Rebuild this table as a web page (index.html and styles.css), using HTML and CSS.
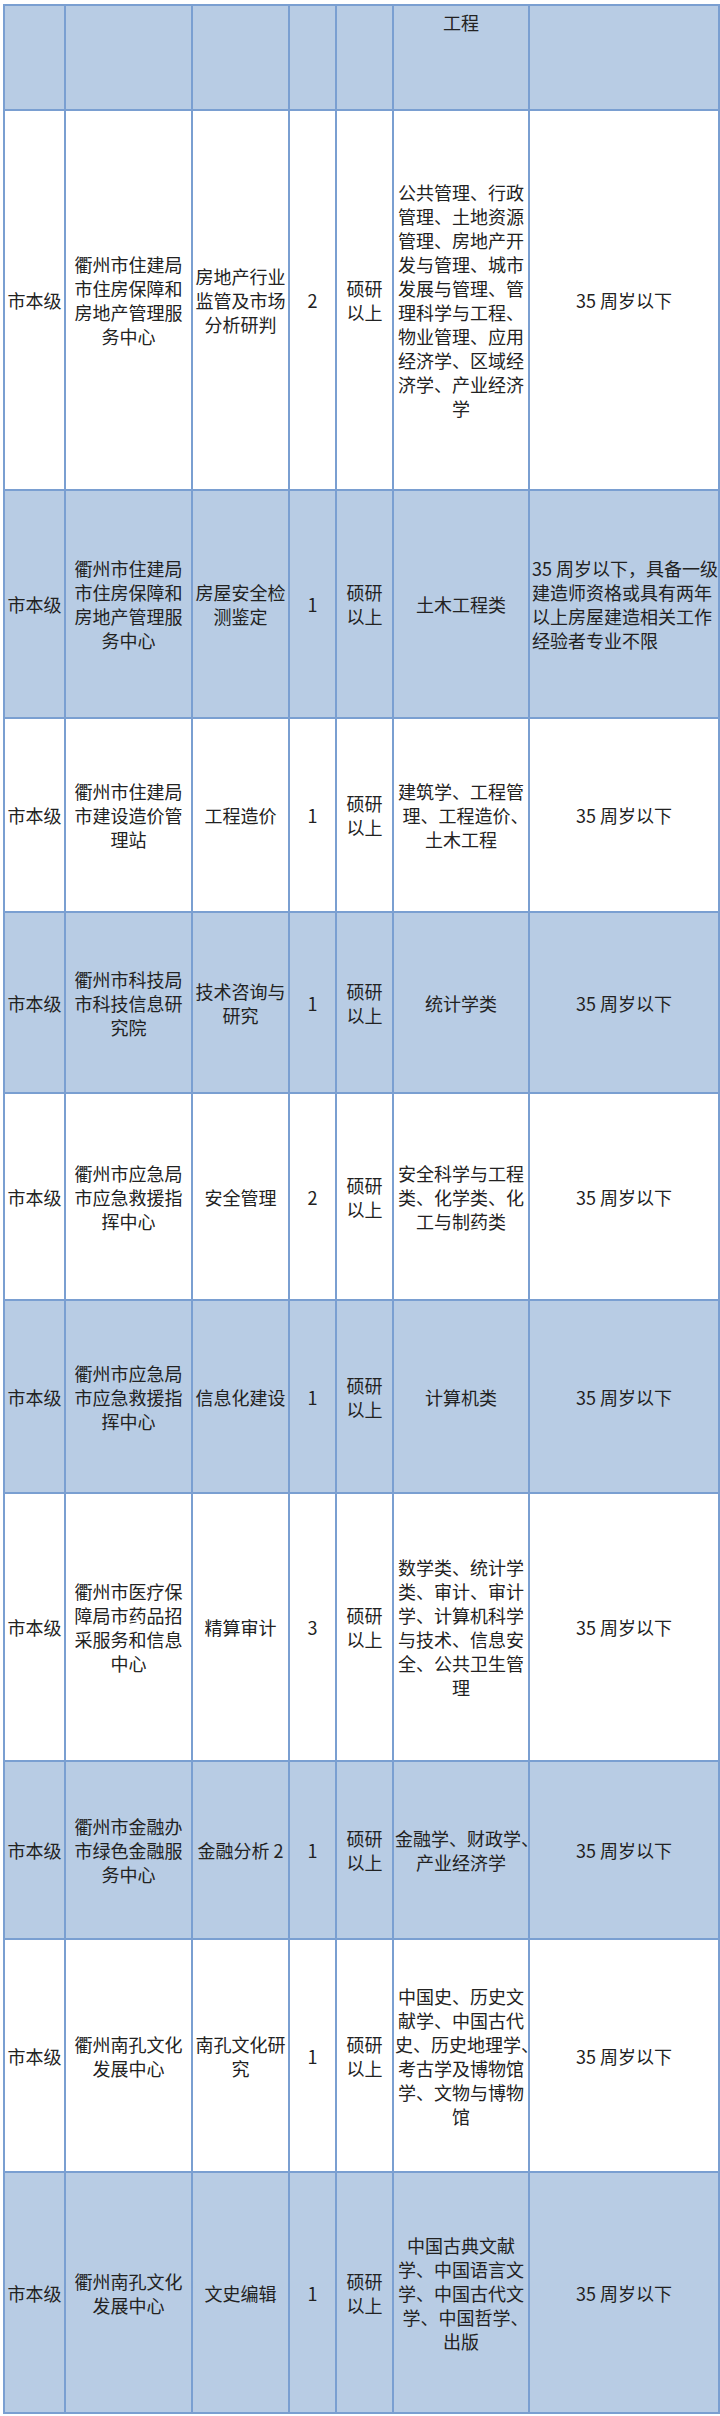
FILE: index.html
```html
<!DOCTYPE html>
<html lang="zh-CN">
<head>
<meta charset="utf-8">
<title>岗位表</title>
<link rel="stylesheet" href="styles.css">
</head>
<body>
<table class="sheet">
  <colgroup>
    <col class="c1"><col class="c2"><col class="c3"><col class="c4"><col class="c5"><col class="c6"><col class="c7">
  </colgroup>
  <tbody>
    <tr class="alt r0">
      <td></td><td></td><td></td><td></td><td></td>
      <td class="top">工程</td>
      <td></td>
    </tr>
    <tr class="r1">
      <td>市本级</td>
      <td>衢州市住建局<br>市住房保障和<br>房地产管理服<br>务中心</td>
      <td>房地产行业<br>监管及市场<br>分析研判</td>
      <td>2</td>
      <td>硕研<br>以上</td>
      <td>公共管理、行政<br>管理、土地资源<br>管理、房地产开<br>发与管理、城市<br>发展与管理、管<br>理科学与工程、<br>物业管理、应用<br>经济学、区域经<br>济学、产业经济<br>学</td>
      <td>35 周岁以下</td>
    </tr>
    <tr class="alt r2">
      <td>市本级</td>
      <td>衢州市住建局<br>市住房保障和<br>房地产管理服<br>务中心</td>
      <td>房屋安全检<br>测鉴定</td>
      <td>1</td>
      <td>硕研<br>以上</td>
      <td>土木工程类</td>
      <td class="left">35 周岁以下，具备一级<br>建造师资格或具有两年<br>以上房屋建造相关工作<br>经验者专业不限</td>
    </tr>
    <tr class="r3">
      <td>市本级</td>
      <td>衢州市住建局<br>市建设造价管<br>理站</td>
      <td>工程造价</td>
      <td>1</td>
      <td>硕研<br>以上</td>
      <td>建筑学、工程管<br>理、工程造价<span class="hw">、</span><br>土木工程</td>
      <td>35 周岁以下</td>
    </tr>
    <tr class="alt r4">
      <td>市本级</td>
      <td>衢州市科技局<br>市科技信息研<br>究院</td>
      <td>技术咨询与<br>研究</td>
      <td>1</td>
      <td>硕研<br>以上</td>
      <td>统计学类</td>
      <td>35 周岁以下</td>
    </tr>
    <tr class="r5">
      <td>市本级</td>
      <td>衢州市应急局<br>市应急救援指<br>挥中心</td>
      <td>安全管理</td>
      <td>2</td>
      <td>硕研<br>以上</td>
      <td>安全科学与工程<br>类、化学类、化<br>工与制药类</td>
      <td>35 周岁以下</td>
    </tr>
    <tr class="alt r6">
      <td>市本级</td>
      <td>衢州市应急局<br>市应急救援指<br>挥中心</td>
      <td>信息化建设</td>
      <td>1</td>
      <td>硕研<br>以上</td>
      <td>计算机类</td>
      <td>35 周岁以下</td>
    </tr>
    <tr class="r7">
      <td>市本级</td>
      <td>衢州市医疗保<br>障局市药品招<br>采服务和信息<br>中心</td>
      <td>精算审计</td>
      <td>3</td>
      <td>硕研<br>以上</td>
      <td>数学类、统计学<br>类、审计、审计<br>学、计算机科学<br>与技术、信息安<br>全、公共卫生管<br>理</td>
      <td>35 周岁以下</td>
    </tr>
    <tr class="alt r8">
      <td>市本级</td>
      <td>衢州市金融办<br>市绿色金融服<br>务中心</td>
      <td>金融分析 2</td>
      <td>1</td>
      <td>硕研<br>以上</td>
      <td>金融学、财政学<span class="hw">、</span><br>产业经济学</td>
      <td>35 周岁以下</td>
    </tr>
    <tr class="r9">
      <td>市本级</td>
      <td>衢州南孔文化<br>发展中心</td>
      <td>南孔文化研<br>究</td>
      <td>1</td>
      <td>硕研<br>以上</td>
      <td>中国史、历史文<br>献学、中国古代<br>史、历史地理学<span class="hw">、</span><br>考古学及博物馆<br>学、文物与博物<br>馆</td>
      <td>35 周岁以下</td>
    </tr>
    <tr class="alt r10">
      <td>市本级</td>
      <td>衢州南孔文化<br>发展中心</td>
      <td>文史编辑</td>
      <td>1</td>
      <td>硕研<br>以上</td>
      <td>中国古典文献<br>学、中国语言文<br>学、中国古代文<br>学、中国哲学<span class="hw">、</span><br>出版</td>
      <td>35 周岁以下</td>
    </tr>
  </tbody>
</table>
</body>
</html>
```

FILE: styles.css
```css
html, body {
  margin: 0;
  padding: 0;
  background: #ffffff;
}

body {
  font-family: "Noto Sans CJK SC", "Noto Sans", sans-serif;
  color: #222222;
}

.sheet {
  margin: 4px 0 0 3px;
  width: 715px;
  border-collapse: collapse;
  table-layout: fixed;
  font-size: 18px;
  line-height: 24px;
}

.c1 { width: 61px; }
.c2 { width: 127px; }
.c3 { width: 97px; }
.c4 { width: 47px; }
.c5 { width: 57px; }
.c6 { width: 136px; }
.c7 { width: 190px; }

.sheet td {
  border: 2px solid #7a9fd1;
  padding: 0 1px;
  text-align: center;
  vertical-align: middle;
  white-space: nowrap;
}

.alt td {
  background: #b8cce4;
}

.sheet td.top {
  vertical-align: top;
  padding-top: 4px;
}

.sheet td.left {
  text-align: left;
  padding-left: 2px;
}

.hw {
  font-feature-settings: "halt" 1;
}

.r0 { height: 105px; }
.r1 { height: 380px; }
.r2 { height: 228px; }
.r3 { height: 194px; }
.r4 { height: 181px; }
.r5 { height: 207px; }
.r6 { height: 193px; }
.r7 { height: 268px; }
.r8 { height: 178px; }
.r9 { height: 233px; }
.r10 { height: 241px; }
```
